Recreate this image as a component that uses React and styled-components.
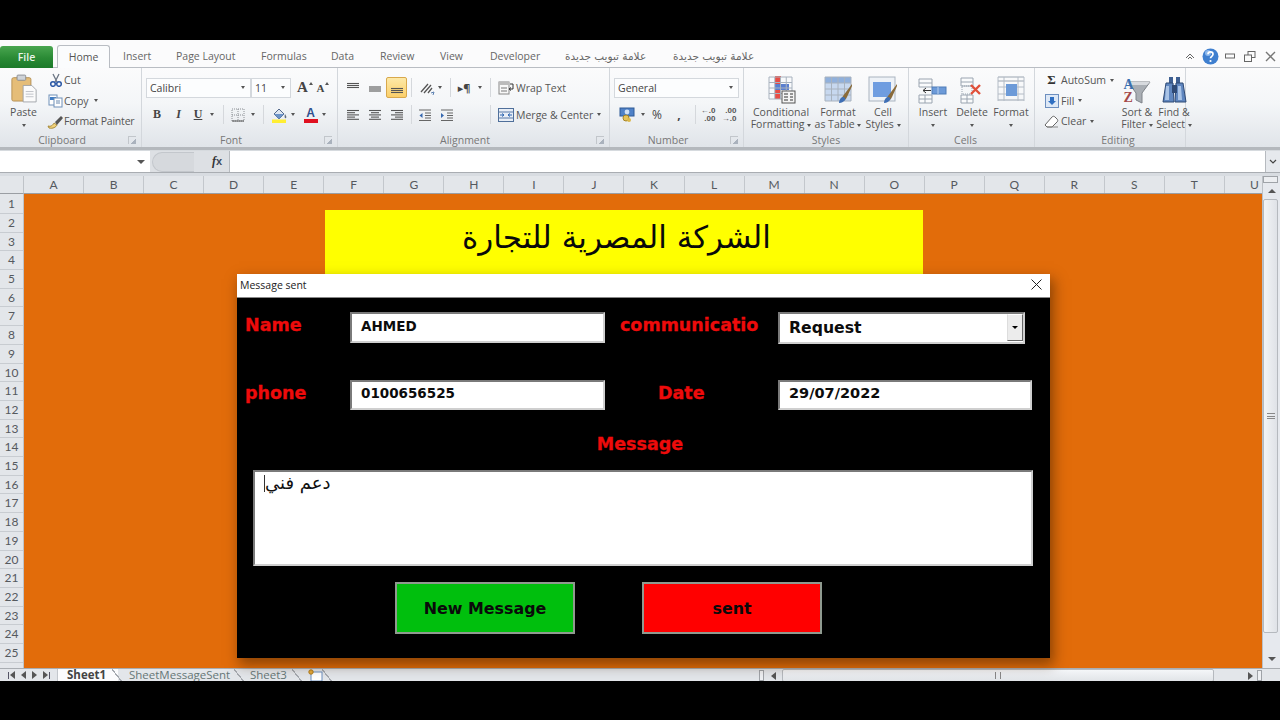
import React from "react";
import styled, { createGlobalStyle } from "styled-components";

const Global = createGlobalStyle`
  html, body { margin: 0; padding: 0; background: #000; }
  * { box-sizing: border-box; }
`;
const UI = `"Open Sans", "DejaVu Sans", sans-serif`;
const AR = `"DejaVu Sans", sans-serif`;

const Page = styled.div`
  position: relative; width: 1280px; height: 720px; background: #000;
  padding: 40px 0 39px; overflow: hidden; font-family: ${UI};
`;
const Excel = styled.div`display: flex; flex-direction: column; height: 641px; background: #d8dce1;`;

/* tabs */
const TabBar = styled.div`
  display: flex; align-items: flex-end; height: 28px; background: #fbfbfc;
  border-bottom: 1px solid #b9bdc3; flex: none;
`;
const FileTab = styled.div`
  width: 53px; height: 22px; margin-bottom: -1px; display: flex; align-items: center; justify-content: center;
  background: linear-gradient(#4aa650, #2a8a35 55%, #1c7a2a); color: #eaf5ea; font-size: 10.5px; font-weight: 600;
  border-radius: 3px 3px 0 0;
`;
const HomeTab = styled.div`
  width: 53px; height: 23px; margin: 0 13px -1px 4px; display: flex; align-items: center; justify-content: center;
  background: #fbfcfd; color: #555; font-size: 10.5px;
  border: 1px solid #b9bdc3; border-bottom: none; border-radius: 3px 3px 0 0;
`;
const TabLabel = styled.div`
  width: ${p => p.$w}px; height: 21px; line-height: 21px; flex: none; color: #666; white-space: nowrap;
  font-size: 10.5px; font-family: ${p => (p.$ar ? AR : UI)};
`;
const WinControls = styled.div`
  margin-left: auto; width: 100px; height: 22px; display: flex; align-items: center; flex: none;
`;
const WinSlot = styled.span`width: 20px; display: flex; justify-content: center; align-items: center;`;

/* ribbon */
const Ribbon = styled.div`
  display: flex; height: 82px; flex: none;
  background: linear-gradient(#fbfbfc, #f4f6f8 45%, #e0e4e9 100%);
  border-bottom: 3px solid #b4b8bd;
`;
const Group = styled.div`
  width: ${p => p.$w}px; flex: none; display: flex; flex-direction: column;
  border-right: 1px solid #d3d7dc;
`;
const GroupBody = styled.div`
  height: 65px; flex: none; display: ${p => (p.$stack ? "block" : "flex")};
  padding: ${p => p.$pad || "0"};
`;
const GroupFoot = styled.div`
  height: 14px; display: flex; align-items: center; padding: ${p => p.$pad || "0 5px 0 0"};
`;
const GroupName = styled.div`flex: 1; text-align: center; font-size: 10.5px; color: #777; line-height: 14px;`;
const Launcher = styled.span`
  width: 8px; height: 8px; flex: none; margin-left: 4px; border: 1px solid #c2c6cb; border-width: 1px 0 0 1px;
  background: linear-gradient(135deg, transparent 60%, #aab2bd 60%);
`;
const ToolRow = styled.div`
  display: flex; align-items: center; height: ${p => p.$h || 19}px; margin-top: ${p => p.$mt || 0}px;
`;
const Tool = styled.span`
  width: ${p => p.$w}px; height: 100%; flex: none; display: flex; align-items: center; justify-content: center; gap: 3px;
  color: #444; font-size: ${p => p.$fs || 12}px; font-family: ${p => p.$serif ? `"Liberation Serif", serif` : UI};
  font-weight: ${p => (p.$bold ? 700 : 400)}; font-style: ${p => (p.$it ? "italic" : "normal")};
  text-decoration: ${p => (p.$ul ? "underline" : "none")};
`;
const ActiveTool = styled(Tool)`
  height: 21px; background: linear-gradient(#fde9a8, #fbcf6a); border: 1px solid #d8a84c; border-radius: 2px;
`;
const Sep = styled.span`
  width: ${p => p.$w || 8}px; height: 19px; flex: none; display: flex; justify-content: center;
  &::before { content: ""; width: 1px; background: #d5d8dc; }
`;
const Gap = styled.span`width: ${p => p.$w}px; flex: none;`;
const Caret = styled.span`
  flex: none; width: 0; height: 0; display: inline-block; vertical-align: middle;
  border: 2.5px solid transparent; border-top: 3px solid #555; border-bottom: none; margin-left: ${p => p.$ml || 0}px;
`;
const UpCaret = styled(Caret)`
  border-top: none; border-bottom: 3px solid #555; align-self: flex-start; margin-top: 4px; margin-left: -2px;
`;
const Combo = styled.div`
  width: ${p => p.$w}px; height: 20px; flex: none; display: flex; align-items: center; justify-content: space-between;
  padding: 0 5px 0 3px; background: #fcfdfe; border: 1px solid #d4d8dd; font-size: 10.5px; color: #444;
`;
const Stack = styled.div`
  width: ${p => p.$w}px; flex: none; padding-top: 2px; margin-left: ${p => p.$ml || 0}px;
`;
const StackRow = styled.div`
  display: flex; align-items: center; height: 20.5px; font-size: 10.5px; color: #555; white-space: nowrap;
  letter-spacing: ${p => p.$ls || 0}px;
`;
const StackIcon = styled.span`
  width: ${p => p.$w || 17}px; flex: none; display: flex; align-items: center; justify-content: center;
  font-size: 13px; font-family: "Liberation Serif", serif; font-weight: 700; color: #333;
`;
const BigTool = styled.div`
  width: ${p => p.$w}px; flex: none; display: flex; flex-direction: column; align-items: center;
`;
const BigIcon = styled.div`
  height: 38px; width: 100%; display: flex; align-items: flex-end; justify-content: center; padding-bottom: 2px;
`;
const BigText = styled.div`
  font-size: 10.5px; line-height: 12px; text-align: center; color: #555; white-space: nowrap;
`;
const SortGlyph = styled.div`
  display: flex; flex-direction: column; font: 700 14px/13px "Liberation Serif", serif; margin-right: -7px; z-index: 1;
`;
const SortA = styled.span`color: #3b6fb0;`;
const SortZ = styled.span`color: #a54a4a;`;
const Decimals = styled.span`
  font: 700 8px/8px "Liberation Sans", sans-serif; color: #555; text-align: right; white-space: pre;
`;
const FontA = styled.span`
  display: flex; flex-direction: column; align-items: center; width: 16px;
  font: 700 12px/12px "Liberation Sans", sans-serif; color: #2f4f8f;
`;
const ColorBar = styled.span`width: 14px; height: 4px; background: ${p => p.$c};`;
const Pil = styled.span`font: 700 11px/1 "Liberation Sans", sans-serif; color: #3b4a5a;`;

/* formula bar */
const FormulaBar = styled.div`
  display: flex; height: 23px; flex: none; margin-bottom: 3px; padding-top: 1px;
  background: #d6dade; border-bottom: 1px solid #a9adb2;
`;
const NameBox = styled.div`
  width: 150px; background: #fff; display: flex; align-items: center; justify-content: flex-end; padding-right: 5px;
`;
const FxArea = styled.div`
  width: 80px; display: flex; align-items: center; padding-left: 2px; background: #dde0e4;
  font: italic 700 12px "Liberation Serif", serif; color: #333; border-right: 1px solid #b6babf;
`;
const FxPill = styled.span`
  width: 42px; height: 20px; border: 1px solid #c3c7cc; border-right: none; border-radius: 10px 0 0 10px;
  background: #d6d9dd; margin-right: 18px; flex: none;
`;
const FormulaInput = styled.div`flex: 1; background: #fff;`;
const FormulaEnd = styled.div`
  width: 15px; background: #e6e9ed; display: flex; align-items: center; justify-content: center;
  border-left: 1px solid #b6babf;
`;

/* grid */
const GridArea = styled.div`
  flex: 1; min-height: 0; display: grid; grid-template-columns: 24px 1238px 18px; grid-template-rows: 18px 474px 13px;
`;
const Corner = styled.div`background: #e3e6ea; border-right: 1px solid #bfc3c8; border-bottom: 1px solid #9a9ea3;`;
const ColHeads = styled.div`display: flex; overflow: hidden; background: #e3e6ea; border-bottom: 1px solid #9a9ea3;`;
const ColHead = styled.div`
  flex: 0 0 60.05px; border-right: 1px solid #c3c7cc; text-align: center;
  font: 400 12px/17px Lato, sans-serif; color: #55595e;
`;
const RowHeads = styled.div`overflow: hidden; background: #e3e6ea; border-right: 1px solid #bfc3c8; padding-top: 1.2px;`;
const RowHead = styled.div`
  height: 18.71px; border-bottom: 1px solid #c8ccd1; text-align: center;
  font: 400 12px/18px Lato, sans-serif; color: #55595e;
`;
const Sheet = styled.div`background: #e26c0a; padding: 16px 0 0 301px; overflow: hidden;`;
const Banner = styled.div`
  width: 598px; height: 64px; background: #ffff00; padding: 6px 15px 0 0; text-align: center; direction: rtl;
  font: 400 31px/42px ${AR}; color: #0a0a0a;
`;
const VScroll = styled.div`
  grid-column: 3; grid-row: 1 / 3; display: flex; flex-direction: column; background: #e6e9ee; border-left: 1px solid #bcc0c5;
`;
const Split = styled.div`height: 7px; margin: 0 2px 0 0; border: 1px solid #9fa3a8; background: #eceef1; flex: none;`;
const ArrowBox = styled.div`height: ${p => p.$h}px; flex: none; display: flex; align-items: center; justify-content: center;`;
const UpTri = styled.span`border: 4px solid transparent; border-bottom: 4px solid #555; border-top: none; width: 0;`;
const DownTri = styled.span`border: 4px solid transparent; border-top: 4px solid #555; border-bottom: none; width: 0;`;
const VThumb = styled.div`
  height: 434px; flex: none; margin-right: 2px; border: 1px solid #b5b9be; border-radius: 2px;
  background: linear-gradient(90deg, #f2f4f6, #dfe2e7); display: flex; align-items: center; justify-content: center;
`;
const Grip = styled.span`
  width: 8px; height: 6px; border-top: 1px solid #888; border-bottom: 1px solid #888;
  &::after { content: ""; display: block; margin-top: 2px; border-top: 1px solid #888; }
`;
const VRest = styled.div`flex: 1; display: flex; flex-direction: column; justify-content: center; align-items: center;`;

const TabsStrip = styled.div`
  grid-column: 1 / 4; display: flex; align-items: flex-start; overflow: hidden;
  background: #e3e6ea; border-top: 1px solid #a9adb2;
`;
const NavArrows = styled.div`width: 58px; height: 100%; flex: none; display: flex; align-items: center; justify-content: space-around; padding: 0 3px 0 4px; border-right: 1px solid #c3c7cc;`;
const SheetTab = styled.div`
  width: ${p => p.$w}px; flex: none; height: 12px; padding-left: ${p => p.$pl}px; white-space: nowrap;
  font: ${p => (p.$on ? 700 : 400)} 11.5px/12px "Open Sans", sans-serif; color: ${p => (p.$on ? "#444" : "#677")};
  background: ${p => (p.$on ? "#fcfcfd" : "transparent")};
`;
const Slash = styled.span`
  width: 10px; height: 13px; flex: none; margin-left: -6px;
  background: linear-gradient(to top left, transparent 46%, #a6aab0 46%, #a6aab0 54%, transparent 54%);
  transform: scaleX(-1);
`;
const NewTab = styled.span`width: ${p => p.$w}px; flex: none; display: flex; justify-content: center;`;
const HBar = styled.div`
  margin-left: auto; width: 521px; display: flex; align-items: center; height: 13px; flex: none;
`;
const HSplit = styled.span`width: 5px; height: 11px; border: 1px solid #9fa3a8; background: #eef0f3; flex: none;`;
const HArrow = styled.span`width: ${p => p.$w}px; display: flex; justify-content: center; flex: none;`;
const HThumb = styled.div`
  width: 432px; height: 13px; flex: none; border: 1px solid #b5b9be; border-radius: 2px;
  background: linear-gradient(#f4f6f8, #e1e4e8); display: flex; align-items: center; justify-content: center;
`;
const HGrip = styled.span`width: 6px; height: 7px; border-left: 1px solid #888; border-right: 1px solid #888;`;
const HRest = styled.span`flex: 1;`;
const RTri = styled.span`border: 4px solid transparent; border-left: 5px solid #555; border-right: none; height: 0;`;
const LTri = styled.span`border: 4px solid transparent; border-right: 5px solid #555; border-left: none; height: 0;`;
const NavBar = styled.span`width: 1px; height: 7px; background: #556; margin: 0 1px;`;
const NavItem = styled.span`display: flex; align-items: center;`;

/* dialog */
const Dialog = styled.div`
  position: absolute; left: 237px; top: 274px; width: 813px; height: 384px; background: #000;
  box-shadow: 3px 6px 12px 1px rgba(60, 30, 0, 0.5);
  display: flex; flex-direction: column;
`;
const DialogTitle = styled.div`
  height: 24px; flex: none; background: #fff; display: flex; align-items: center; justify-content: space-between;
  padding: 0 8px 2px 3px; font: 400 10.5px "Open Sans", sans-serif; color: #222; border-bottom: 1px solid #888;
`;
const DialogBody = styled.div`padding: 14px 0 0 8px; flex: 1;`;
const FormRow = styled.div`display: flex; align-items: flex-start; margin-bottom: ${p => p.$mb}px;`;
const FieldLabel = styled.div`
  width: ${p => p.$w}px; padding-left: ${p => p.$pl || 0}px; flex: none; height: 26px; white-space: nowrap;
  font: 700 17.5px/26px "DejaVu Sans", sans-serif; color: #ee0b0b; -webkit-text-stroke: 0.3px #ee0b0b;
`;
const Sunken = styled.div`
  width: ${p => p.$w}px; height: ${p => p.$h}px; flex: none; background: #fff; display: flex; align-items: center;
  padding-left: 9px; border: 2px solid; border-color: #7a7a7a #cfcfcf #cfcfcf #7a7a7a;
  font: 700 ${p => p.$fs || 13.5}px "DejaVu Sans", sans-serif; color: #0c0c0c;
  padding-bottom: ${p => p.$pb || 0}px;
`;
const DropButton = styled.span`
  width: 16px; height: 27px; margin-left: auto; flex: none; display: flex; align-items: center; justify-content: center;
  background: #ececec; border: 1px solid; border-color: #fff #666 #666 #ddd;
`;
const DropTri = styled.span`border: 3px solid transparent; border-top: 3px solid #000; border-bottom: none; width: 0;`;
const MessageTitle = styled.div`
  width: 790px; height: 24px; margin-top: 1px; text-align: center; color: #ee0b0b;
  font: 700 17.5px/24px "DejaVu Sans", sans-serif; -webkit-text-stroke: 0.3px #ee0b0b; margin-bottom: 14px;
`;
const MessageBox = styled.div`
  width: 780px; height: 96px; margin-left: 8px; background: #fff; display: flex; align-items: flex-start;
  padding: 1px 0 0 9px; border: 2px solid; border-color: #7a7a7a #cfcfcf #cfcfcf #7a7a7a;
`;
const TextCaret = styled.span`width: 1px; height: 17px; background: #333; flex: none; margin-top: 2px;`;
const MessageText = styled.span`font: 400 18px/20px ${AR}; color: #111; direction: rtl;`;
const ButtonRow = styled.div`display: flex; margin: 16px 0 0 150px; gap: 67px;`;
const FormButton = styled.div`
  width: ${p => p.$w}px; height: 52px; display: flex; align-items: center; justify-content: center;
  background: ${p => p.$bg}; border: 2px solid #8f9a8f; color: #0a0a0a;
  font: 700 15.9px "DejaVu Sans", sans-serif;
`;

/* icons */
const Ico = ({ w = 16, h = 16, vb, children }) => (
  <svg width={w} height={h} viewBox={vb || `0 0 ${w} ${h}`} fill="none" style={{ flex: "none", display: "block" }}>{children}</svg>
);
const Lines = ({ rows }) => (
  <Ico w={14} h={14}>{rows.map(([a, b, y], i) => <path key={i} d={`M${a} ${y}H${b}`} stroke="#555" strokeWidth="1.1" />)}</Ico>
);
const al = (k) => {
  const l = [[1, 13], [1, 9], [1, 13], [1, 9], [1, 13]], c = [[1, 13], [3, 11], [1, 13], [3, 11], [1, 13]], r = [[1, 13], [5, 13], [1, 13], [5, 13], [1, 13]];
  return (k === "l" ? l : k === "c" ? c : r).map((p, i) => [p[0], p[1], 2.5 + i * 2.2]);
};
const PasteIcon = () => (
  <Ico w={26} h={31} vb="0 0 30 33">
    <rect x="1" y="4" width="22" height="27" rx="2" fill="#e5bd78" stroke="#b08a4c" />
    <rect x="7" y="1" width="10" height="6" rx="1" fill="#cfd3d8" stroke="#85898e" />
    <path d="M14 13h10l5 5v14H14z" fill="#fbfbfb" stroke="#9a9ea3" />
    <path d="M17 20h9M17 23h9M17 26h9" stroke="#b8bcc2" />
  </Ico>
);
const CutIcon = () => (
  <Ico w={14} h={14}>
    <path d="M4 1l4 8M10 1L6 9" stroke="#6c7684" strokeWidth="1.3" />
    <circle cx="4" cy="11" r="2.3" stroke="#2b58a5" strokeWidth="1.5" /><circle cx="10" cy="11" r="2.3" stroke="#2b58a5" strokeWidth="1.5" />
  </Ico>
);
const CopyIcon = () => (
  <Ico w={15} h={14}>
    <rect x="1" y="1" width="8" height="10" fill="#fff" stroke="#6f8fb8" /><rect x="2" y="3" width="6" height="3" fill="#3f7cc4" />
    <rect x="6" y="4" width="8" height="9" fill="#fff" stroke="#6f8fb8" /><path d="M8 7h4M8 9h4" stroke="#6a8ab0" />
  </Ico>
);
const PainterIcon = () => (
  <Ico w={17} h={15}>
    <path d="M1 12c3 1 5-1 6-3l3 2c-1 2-4 4-8 3z" fill="#f1d27a" stroke="#a78a3a" />
    <path d="M8 8l6-6 2 2-6 7z" fill="#555" />
  </Ico>
);
const BordersIcon = () => (
  <Ico w={14} h={14}>
    <path d="M1 1h12v12H1zM7 1v12M1 7h12" stroke="#8a8e93" strokeDasharray="1 1" />
    <path d="M1 13h12" stroke="#555" />
  </Ico>
);
const FillIcon = () => (
  <Ico w={17} h={16}>
    <path d="M3 7l5-5 5 5-5 5z" fill="#dfe7f2" stroke="#52688a" /><path d="M3 7h10l-5 5z" fill="#6c93c8" />
    <path d="M14 7c1 2 2 3 1 4s-2-1-1-4z" fill="#5f6d80" /><rect x="1" y="12.5" width="14" height="3.5" fill="#ffee33" />
  </Ico>
);
const OrientIcon = () => (
  <Ico w={16} h={14}>
    <path d="M2 11L9 3M5 12l7-8M9 12l4-5" stroke="#555" strokeWidth="1.3" />
    <path d="M12 12l3-1-1 3" stroke="#5a7fb0" />
  </Ico>
);
const IndentIcon = ({ flip }) => (
  <Ico w={14} h={14}>
    <path d="M1 2h12M7 5h6M7 7.5h6M7 10h6M1 12.5h12" stroke="#666" strokeWidth="1.1" />
    <path d={flip ? "M1 5l3 2.5-3 2.5z" : "M4.5 5l-3 2.5 3 2.5z"} fill="#3568b0" />
  </Ico>
);
const WrapIcon = () => (
  <Ico w={16} h={14}>
    <rect x="1" y="1" width="10" height="12" fill="#f8f8f8" stroke="#888" />
    <path d="M1 1h10v3H1z" fill="#bbb" /><path d="M3 7h6M3 10h6" stroke="#777" />
    <path d="M12 3h3v5h-3M13 6.5l-2 1.5 2 1.5" stroke="#333" />
  </Ico>
);
const MergeIcon = () => (
  <Ico w={16} h={14}>
    <rect x=".5" y=".5" width="15" height="13" fill="#e8eef6" stroke="#4f6f9a" />
    <path d="M.5 4h15M.5 10h15" stroke="#5a7aa8" />
    <path d="M2 7h4M14 7h-4M4 5.5L6 7 4 8.5M12 5.5L10 7l2 1.5" stroke="#2e66b2" />
  </Ico>
);
const CurrencyIcon = () => (
  <Ico w={16} h={15}>
    <rect x="1" y="1" width="14" height="8" fill="#4f81c7" stroke="#2f5a96" />
    <circle cx="8" cy="5" r="2.4" fill="#cfe0f6" />
    <circle cx="7" cy="11" r="3" fill="#e6c35a" stroke="#a68425" /><circle cx="10" cy="13" r="2" fill="#dcb84b" />
  </Ico>
);
const Cells = ({ x = 0, y = 0, w = 26, h = 24, cols = 4, rows = 4 }) => {
  const p = [];
  for (let i = 0; i <= cols; i++) p.push(`M${x + (i * w) / cols} ${y}v${h}`);
  for (let i = 0; i <= rows; i++) p.push(`M${x} ${y + (i * h) / rows}h${w}`);
  return <path d={p.join("")} stroke="#a8b2be" fill="none" />;
};
const CondIcon = () => (
  <Ico w={29} h={29}>
    <rect x="2" y="2" width="23" height="22" fill="#f8f9fb" />
    <rect x="8" y="1" width="6" height="8" fill="#e84c45" /><rect x="8" y="9" width="14" height="6" fill="#5a7fd0" />
    <rect x="8" y="15" width="6" height="9" fill="#e84c45" />
    <Cells x={2} y={2} w={23} h={22} />
    <rect x="15" y="16" width="13" height="12" fill="#f4f4f4" stroke="#555" />
    <path d="M17 19h4M17 22h4M17 25h4M23 19h3M23 22h3M23 25h3" stroke="#333" />
  </Ico>
);
const TableIcon = () => (
  <Ico w={31} h={28}>
    <rect x="2" y="1" width="26" height="24" fill="#c7d8ef" /><rect x="2" y="1" width="26" height="6" fill="#90b0dc" />
    <Cells x={2} y={1} w={26} h={24} />
    <path d="M29 8L20 20l-3 5c3 0 6-1 7-4l5-11z" fill="#8a6b3a" /><path d="M16 27c0-3 2-6 4-6s3 2 2 3-3 3-6 3z" fill="#3f6fb5" />
  </Ico>
);
const CellStyleIcon = () => (
  <Ico w={31} h={28}>
    <rect x="1" y="1" width="26" height="24" fill="#eef2f7" stroke="#aab4c0" /><rect x="5" y="6" width="18" height="15" fill="#6f9de0" />
    <path d="M29 8L20 20l-3 5c3 0 6-1 7-4l5-11z" fill="#8a6b3a" /><path d="M16 27c0-3 2-6 4-6s3 2 2 3-3 3-6 3z" fill="#3f6fb5" />
  </Ico>
);
const InsertIcon = () => (
  <Ico w={30} h={26}>
    <path d="M1 1h13v8H1zM1 5h13M1 17h13v8H1zM7 17v8M1 21h13" stroke="#9aa4b0" fill="#fafbfc" />
    <rect x="14" y="9" width="14" height="7" fill="#6c9ad8" stroke="#4f7cb8" /><path d="M20 9v7" stroke="#b9d0ee" />
    <path d="M13 12.5H5M8 10l-3 2.5L8 15" stroke="#333" />
  </Ico>
);
const DeleteIcon = () => (
  <Ico w={24} h={27}>
    <path d="M1 1h12v8H1zM1 5h12M1 18h12v8H1zM7 18v8M1 22h12" stroke="#9aa4b0" fill="#fafbfc" />
    <path d="M2 9h10v8H2z" stroke="#9aa4b0" strokeDasharray="1 1" />
    <path d="M11 8l9 9M20 8l-9 9" stroke="#e0503a" strokeWidth="2.4" />
  </Ico>
);
const FormatIcon = () => (
  <Ico w={30} h={28}>
    <path d="M2 1h26M2 5h26M2 24h26" stroke="#9aa4b0" /><path d="M2 1v24M8 1v24M22 1v24M28 1v24M2 11h26M2 18h26" stroke="#b4bcc6" />
    <rect x="10" y="8" width="11" height="12" fill="#6c9ad8" />
  </Ico>
);
const FillDownIcon = () => (
  <Ico w={14} h={14}>
    <rect x=".5" y=".5" width="13" height="13" fill="#dde8f6" stroke="#6d8fbf" />
    <path d="M5 3h4v4h2L7 11 3 7h2z" fill="#2f6fc2" />
  </Ico>
);
const EraserIcon = () => (
  <Ico w={15} h={13}>
    <path d="M1 10l7-8c1-1 2-1 3 0l2 2c1 1 1 2 0 3l-5 5H3z" fill="#fff" stroke="#666" /><path d="M3 12h11" stroke="#888" />
  </Ico>
);
const FunnelIcon = () => (
  <Ico w={24} h={25}>
    <path d="M1 3h22l-8 11v10l-6-3v-7z" fill="#a9aeb4" stroke="#7e8389" /><path d="M1 3h22l-3 3H4z" fill="#d7dade" />
  </Ico>
);
const BinocIcon = () => (
  <Ico w={27} h={28}>
    <rect x="8" y="1" width="4" height="6" fill="#3e5f92" /><rect x="15" y="1" width="4" height="6" fill="#3e5f92" />
    <path d="M5 7h7l1 19H2z" fill="#5f86bf" stroke="#2f4a75" /><path d="M15 7h7l3 19H14z" fill="#5f86bf" stroke="#2f4a75" />
    <rect x="11" y="9" width="5" height="8" fill="#2f4a75" /><path d="M5 10h3v14H4z" fill="#a9c3e6" /><path d="M17 10h3l1 14h-4z" fill="#a9c3e6" />
  </Ico>
);
const NewSheetIcon = () => (
  <Ico w={15} h={12}>
    <rect x="3" y="3" width="11" height="9" fill="#fff" stroke="#6d8fbf" /><circle cx="3" cy="3" r="2.2" fill="#e6a93a" stroke="#b17c1a" />
  </Ico>
);
const Help = () => (
  <Ico w={17} h={17}>
    <circle cx="8.5" cy="8.5" r="8" fill="#3f7fcf" /><circle cx="6" cy="5" r="3" fill="#8db8ec" />
    <path d="M6 6.3c0-3.2 5-3.2 5 0 0 2-2.5 2-2.5 4" stroke="#fff" strokeWidth="1.7" /><circle cx="8.5" cy="13" r="1.1" fill="#fff" />
  </Ico>
);

const Launch = () => <Launcher />;
const COLS = "ABCDEFGHIJKLMNOPQRSTU".split("");
const ROWS = Array.from({ length: 25 }, (_, i) => i + 1);

export default function App() {
  return (
    <Page>
      <Global />
      <Excel>
        <TabBar>
          <FileTab>File</FileTab>
          <HomeTab>Home</HomeTab>
          <TabLabel $w={53}>Insert</TabLabel>
          <TabLabel $w={85}>Page Layout</TabLabel>
          <TabLabel $w={70}>Formulas</TabLabel>
          <TabLabel $w={49}>Data</TabLabel>
          <TabLabel $w={60}>Review</TabLabel>
          <TabLabel $w={50}>View</TabLabel>
          <TabLabel $w={75}>Developer</TabLabel>
          <TabLabel $w={108} $ar>علامة تبويب جديدة</TabLabel>
          <TabLabel $w={100} $ar>علامة تبويب جديدة</TabLabel>
          <WinControls>
            <WinSlot><Ico w={10} h={8}><path d="M1 6l4-4 4 4M3 7l2-2 2 2" stroke="#666" /></Ico></WinSlot>
            <WinSlot><Help /></WinSlot>
            <WinSlot><Ico w={10} h={6}><rect x=".5" y="1" width="9" height="4" stroke="#666" /></Ico></WinSlot>
            <WinSlot><Ico w={12} h={11}><rect x="4" y=".5" width="7" height="6" stroke="#666" /><rect x=".5" y="4" width="7" height="6.5" fill="#fafafa" stroke="#666" /></Ico></WinSlot>
            <WinSlot><Ico w={11} h={11}><path d="M1 1l9 9M10 1l-9 9" stroke="#777" strokeWidth="1.4" /></Ico></WinSlot>
          </WinControls>
        </TabBar>

        <Ribbon>
          <Group $w={142}>
            <GroupBody>
              <BigTool $w={47}>
                <BigIcon><PasteIcon /></BigIcon>
                <BigText>Paste</BigText>
                <BigText><Caret /></BigText>
              </BigTool>
              <Stack $w={92}>
                <StackRow><StackIcon><CutIcon /></StackIcon>Cut</StackRow>
                <StackRow><StackIcon><CopyIcon /></StackIcon>Copy<Caret $ml={5} /></StackRow>
                <StackRow $ls={-0.2}><StackIcon><PainterIcon /></StackIcon>Format Painter</StackRow>
              </Stack>
            </GroupBody>
            <GroupFoot><GroupName>Clipboard</GroupName><Launch /></GroupFoot>
          </Group>

          <Group $w={196}>
            <GroupBody $stack $pad="10px 0 0 4px">
              <ToolRow>
                <Combo $w={105}>Calibri<Caret /></Combo>
                <Combo $w={40}>11<Caret /></Combo>
                <Gap $w={4} />
                <Tool $w={20} $serif $bold $fs={15}>A<UpCaret /></Tool>
                <Tool $w={16} $serif $bold $fs={11}>A<UpCaret /></Tool>
              </ToolRow>
              <ToolRow $mt={8}>
                <Tool $w={22} $serif $bold>B</Tool>
                <Tool $w={21} $serif $it $bold>I</Tool>
                <Tool $w={30} $serif $bold $ul>U<Caret $ml={5} /></Tool>
                <Sep $w={8} />
                <Tool $w={32}><BordersIcon /><Caret $ml={3} /></Tool>
                <Sep $w={8} />
                <Tool $w={32}><FillIcon /><Caret /></Tool>
                <Tool $w={30}><FontA>A<ColorBar $c="#e01020" /></FontA><Caret /></Tool>
              </ToolRow>
            </GroupBody>
            <GroupFoot><GroupName>Font</GroupName><Launch /></GroupFoot>
          </Group>

          <Group $w={272}>
            <GroupBody $stack $pad="10px 0 0 4px">
              <ToolRow>
                <Tool $w={22}><Lines rows={[[1, 13, 2.5], [1, 13, 4.5], [1, 13, 6.5]]} /></Tool>
                <Tool $w={22}><Lines rows={[[1, 13, 6], [1, 13, 8], [1, 13, 10]]} /></Tool>
                <ActiveTool $w={21}><Lines rows={[[1, 13, 7.5], [1, 13, 9.5], [1, 13, 11.5]]} /></ActiveTool>
                <Sep $w={8} />
                <Tool $w={30}><OrientIcon /><Caret /></Tool>
                <Sep $w={10} />
                <Tool $w={30} $fs={11} $bold>▸¶<Caret $ml={5} /></Tool>
                <Sep $w={10} />
                <StackRow><StackIcon $w={21}><WrapIcon /></StackIcon>Wrap Text</StackRow>
              </ToolRow>
              <ToolRow $mt={8}>
                <Tool $w={22}><Lines rows={al("l")} /></Tool>
                <Tool $w={22}><Lines rows={al("c")} /></Tool>
                <Tool $w={22}><Lines rows={al("r")} /></Tool>
                <Sep $w={6} />
                <Tool $w={22}><IndentIcon /></Tool>
                <Tool $w={22}><IndentIcon flip /></Tool>
                <Gap $w={27} />
                <Sep $w={10} />
                <StackRow><StackIcon $w={21}><MergeIcon /></StackIcon>Merge &amp; Center<Caret $ml={4} /></StackRow>
              </ToolRow>
            </GroupBody>
            <GroupFoot><GroupName>Alignment</GroupName><Launch /></GroupFoot>
          </Group>

          <Group $w={134}>
            <GroupBody $stack $pad="10px 0 0 4px">
              <ToolRow><Combo $w={125}>General<Caret /></Combo></ToolRow>
              <ToolRow $mt={8}>
                <Tool $w={36}><CurrencyIcon /><Caret $ml={3} /></Tool>
                <Tool $w={14} $fs={12}>%</Tool>
                <Tool $w={30} $fs={12} $bold>,</Tool>
                <Sep $w={2} />
                <Tool $w={24}><Decimals>{"←.0\n.00"}</Decimals></Tool>
                <Tool $w={18}><Decimals>{".00\n→.0"}</Decimals></Tool>
              </ToolRow>
            </GroupBody>
            <GroupFoot><GroupName>Number</GroupName><Launch /></GroupFoot>
          </Group>

          <Group $w={165}>
            <GroupBody $pad="0 0 0 4px">
              <BigTool $w={66}>
                <BigIcon><CondIcon /></BigIcon>
                <BigText>Conditional</BigText>
                <BigText>Formatting <Caret /></BigText>
              </BigTool>
              <BigTool $w={48}>
                <BigIcon><TableIcon /></BigIcon>
                <BigText>Format</BigText>
                <BigText>as Table <Caret /></BigText>
              </BigTool>
              <BigTool $w={42}>
                <BigIcon><CellStyleIcon /></BigIcon>
                <BigText>Cell</BigText>
                <BigText>Styles <Caret /></BigText>
              </BigTool>
            </GroupBody>
            <GroupFoot $pad="0"><GroupName>Styles</GroupName></GroupFoot>
          </Group>

          <Group $w={126}>
            <GroupBody $pad="0 0 0 4px">
              <BigTool $w={40}><BigIcon><InsertIcon /></BigIcon><BigText>Insert</BigText><BigText><Caret /></BigText></BigTool>
              <BigTool $w={38}><BigIcon><DeleteIcon /></BigIcon><BigText>Delete</BigText><BigText><Caret /></BigText></BigTool>
              <BigTool $w={40}><BigIcon><FormatIcon /></BigIcon><BigText>Format</BigText><BigText><Caret /></BigText></BigTool>
            </GroupBody>
            <GroupFoot $pad="0 12px 0 0"><GroupName>Cells</GroupName></GroupFoot>
          </Group>

          <Group $w={151}>
            <GroupBody>
              <Stack $w={76} $ml={7}>
                <StackRow><StackIcon $w={19}>Σ</StackIcon>AutoSum<Caret $ml={4} /></StackRow>
                <StackRow><StackIcon $w={19}><FillDownIcon /></StackIcon>Fill<Caret $ml={4} /></StackRow>
                <StackRow><StackIcon $w={19}><EraserIcon /></StackIcon>Clear<Caret $ml={4} /></StackRow>
              </Stack>
              <BigTool $w={38}>
                <BigIcon><SortGlyph><SortA>A</SortA><SortZ>Z</SortZ></SortGlyph><FunnelIcon /></BigIcon>
                <BigText>Sort &amp;</BigText>
                <BigText>Filter <Caret /></BigText>
              </BigTool>
              <BigTool $w={36}>
                <BigIcon><BinocIcon /></BigIcon>
                <BigText>Find &amp;</BigText>
                <BigText>Select <Caret /></BigText>
              </BigTool>
            </GroupBody>
            <GroupFoot $pad="0 0 0 16px"><GroupName>Editing</GroupName></GroupFoot>
          </Group>
        </Ribbon>

        <FormulaBar>
          <NameBox><DownTri /></NameBox>
          <FxArea><FxPill />f<Pil>x</Pil></FxArea>
          <FormulaInput />
          <FormulaEnd><Ico w={8} h={6}><path d="M1 1l3 3 3-3" stroke="#444" strokeWidth="1.2" /></Ico></FormulaEnd>
        </FormulaBar>

        <GridArea>
          <Corner />
          <ColHeads>{COLS.map(c => <ColHead key={c}>{c}</ColHead>)}</ColHeads>
          <VScroll>
            <Split />
            <ArrowBox $h={16}><UpTri /></ArrowBox>
            <VThumb><Grip /></VThumb>
            <VRest>
              <Gap $w={1} />
              <ArrowBox $h={52}><DownTri /></ArrowBox>
            </VRest>
          </VScroll>
          <RowHeads>{ROWS.map(r => <RowHead key={r}>{r}</RowHead>)}</RowHeads>
          <Sheet>
            <Banner>الشركة المصرية للتجارة</Banner>
          </Sheet>
          <TabsStrip>
            <NavArrows>
              <NavItem><NavBar /><LTri /></NavItem>
              <NavItem><LTri /></NavItem>
              <NavItem><RTri /></NavItem>
              <NavItem><RTri /><NavBar /></NavItem>
            </NavArrows>
            <SheetTab $on $w={60} $pl={9}>Sheet1</SheetTab>
            <Slash />
            <SheetTab $w={118} $pl={7}>SheetMessageSent</SheetTab>
            <Slash />
            <SheetTab $w={54} $pl={6}>Sheet3</SheetTab>
            <Slash />
            <NewTab $w={26}><NewSheetIcon /></NewTab>
            <Slash />
            <HBar>
              <HSplit />
              <HArrow $w={18}><LTri /></HArrow>
              <HThumb><HGrip /></HThumb>
              <HRest />
              <HArrow $w={14}><RTri /></HArrow>
              <HSplit />
              <Gap $w={18} />
            </HBar>
          </TabsStrip>
        </GridArea>
      </Excel>

      <Dialog>
        <DialogTitle>
          Message sent
          <Ico w={11} h={11}><path d="M.5.5l10 10M10.5.5l-10 10" stroke="#222" /></Ico>
        </DialogTitle>
        <DialogBody>
          <FormRow $mb={36}>
            <FieldLabel $w={105}>Name</FieldLabel>
            <Sunken $w={255} $h={31} $pb={4}>AHMED</Sunken>
            <Gap $w={15} />
            <FieldLabel $w={158}>communicatio</FieldLabel>
            <Sunken $w={247} $h={32} $fs={15.7} $pb={2}>Request<DropButton><DropTri /></DropButton></Sunken>
          </FormRow>
          <FormRow $mb={22}>
            <FieldLabel $w={105}>phone</FieldLabel>
            <Sunken $w={255} $h={30} $pb={4}>0100656525</Sunken>
            <Gap $w={15} />
            <FieldLabel $w={158} $pl={38}>Date</FieldLabel>
            <Sunken $w={254} $h={30} $pb={4} $fs={14.5}>29/07/2022</Sunken>
          </FormRow>
          <MessageTitle>Message</MessageTitle>
          <MessageBox>
            <TextCaret />
            <MessageText>دعم فني</MessageText>
          </MessageBox>
          <ButtonRow>
            <FormButton $w={180} $bg="#00bf0d">New Message</FormButton>
            <FormButton $w={180} $bg="#ff0000">sent</FormButton>
          </ButtonRow>
        </DialogBody>
      </Dialog>
    </Page>
  );
}
